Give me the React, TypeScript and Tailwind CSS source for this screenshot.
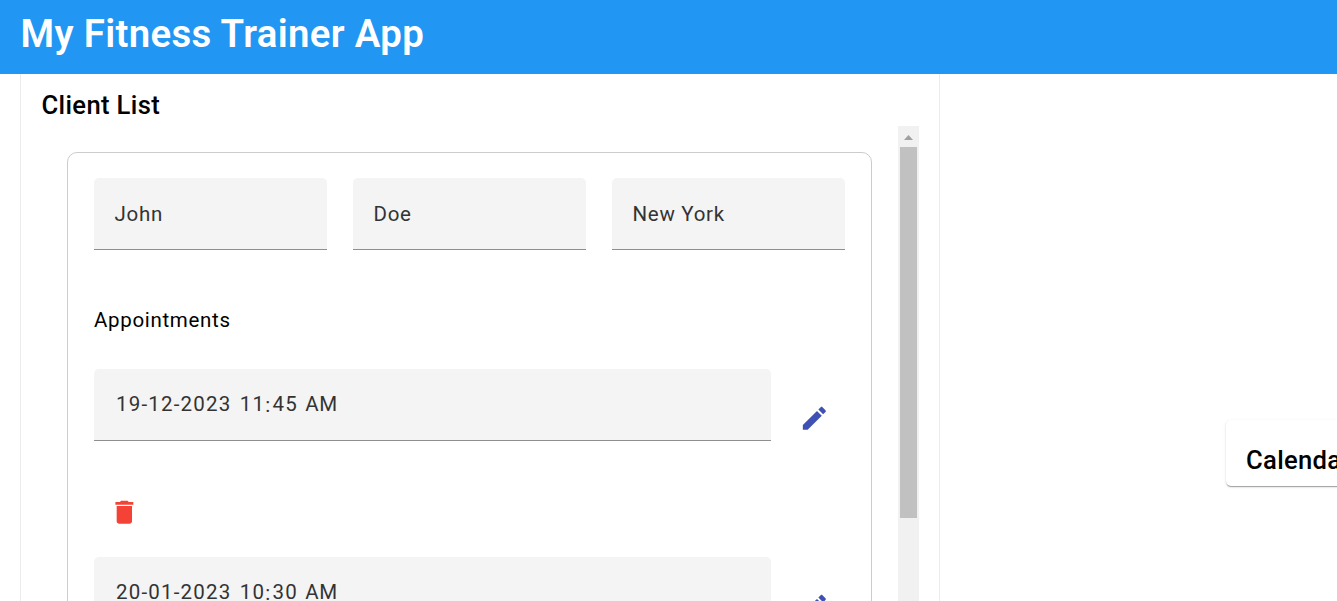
import React from 'react';

const clientFields = ['John', 'Doe', 'New York'];
const appointments = [
  { date: '19-12-2023', hour: '11', minute: '45', period: 'AM' },
  { date: '20-01-2023', hour: '10', minute: '30', period: 'AM' },
];

function Field({ value }: { value: string }) {
  return (
    <div className="h-[72px] w-[233px] shrink-0 rounded-t-[5px] border-b border-[#8f8f8f] bg-[#f4f4f4] px-[20.5px] pt-[21px] text-[20.5px] leading-[31px] tracking-[0.7px] text-[#333333]">
      {value}
    </div>
  );
}

function EditIcon() {
  return (
    <svg viewBox="0 0 24 24" className="size-[30.7px] shrink-0 fill-[#3f51b5]">
      <path d="M3 17.25V21h3.75L17.81 9.94l-3.75-3.75L3 17.25zM20.71 7.04c.39-.39.39-1.02 0-1.41l-2.34-2.34c-.39-.39-1.02-.39-1.41 0l-1.83 1.83 3.75 3.75 1.83-1.83z" />
    </svg>
  );
}

function DeleteIcon() {
  return (
    <svg viewBox="0 0 24 24" className="size-[30.7px] shrink-0 fill-[#f44336]">
      <path d="M6 19c0 1.1.9 2 2 2h8c1.1 0 2-.9 2-2V7H6v12zM19 4h-3.5l-1-1h-5l-1 1H5v2h14V4z" />
    </svg>
  );
}

type AppointmentProps = { date: string; hour: string; minute: string; period: string };

function Appointment({ date, hour, minute, period }: AppointmentProps) {
  return (
    <div className="h-[188px]">
      <div className="flex">
        <div className="h-[72px] w-[677px] shrink-0 whitespace-pre rounded-t-[5px] border-b border-[#8f8f8f] bg-[#f4f4f4] px-[22px] pt-[20px] text-[20.5px] leading-[31px] tracking-[1.2px] text-[#333333]">
          <span>{date} </span>
          <span className="pl-[2px]">{hour}</span>
          <span className="relative top-px">:</span>
          <span className="pl-[1px]">{minute} </span>
          <span className="pl-[1px] tracking-[0.64px]">{period}</span>
        </div>
        <div className="pl-[28px] pt-[34px]">
          <EditIcon />
        </div>
      </div>
      <div className="pl-[15px] pt-[56px]">
        <DeleteIcon />
      </div>
    </div>
  );
}

function Scrollbar() {
  return (
    <div className="w-[21px] shrink-0 bg-[#f1f1f1]">
      <div className="flex h-[21px] items-center justify-center pt-[2px]">
        <svg viewBox="0 0 9 5" className="h-[5px] w-[9px] fill-[#a0a0a0]">
          <path d="M4.5 0L9 5H0z" />
        </svg>
      </div>
      <div className="mx-[2px] h-[371px] bg-[#c1c1c1]" />
    </div>
  );
}

export default function App() {
  return (
    <div className="flex h-[601px] w-[1337px] flex-col overflow-hidden bg-white font-[Roboto,sans-serif] text-black">
      <header className="z-10 h-[74px] shrink-0 bg-[#2196f3] pl-[20.5px] pt-[10px]">
        <h1 className="text-[38.4px] font-semibold leading-[48px] tracking-[0.34px] text-white">My Fitness Trainer App</h1>
      </header>
      <div className="flex min-h-0 flex-1">
        <section className="ml-5 flex w-[920px] shrink-0 flex-col border-x border-[#ececec] px-5">
          <h2 className="h-[52px] pl-[0.5px] pt-[11px] text-[25.6px] font-medium leading-[41px] tracking-[0.36px]">Client List</h2>
          <div className="flex min-h-0 flex-1 justify-between">
            <div className="ml-[26px] mt-[26px] h-[700px] w-[805px] rounded-[10px] border border-[#cccccc] px-[26px] pt-[25px]">
              <div className="flex gap-[26px]">
                {clientFields.map((value) => (
                  <Field key={value} value={value} />
                ))}
              </div>
              <h3 className="mt-[55px] h-[64px] text-[20.5px] leading-[31px] tracking-[0.68px]">Appointments</h3>
              {appointments.map((appointment) => (
                <Appointment key={appointment.date} {...appointment} />
              ))}
            </div>
            <Scrollbar />
          </div>
        </section>
        <section className="ml-[286px] mt-[346px] h-[66px] w-[300px] shrink-0 rounded-[5px] bg-white pl-5 pt-5 shadow-[0_2px_1px_-1px_rgba(0,0,0,0.2),0_1px_1px_0_rgba(0,0,0,0.14),0_1px_3px_0_rgba(0,0,0,0.12)]">
          <h2 className="text-[25.6px] font-medium leading-[41px] tracking-[0.32px]">Calendar</h2>
        </section>
      </div>
    </div>
  );
}
